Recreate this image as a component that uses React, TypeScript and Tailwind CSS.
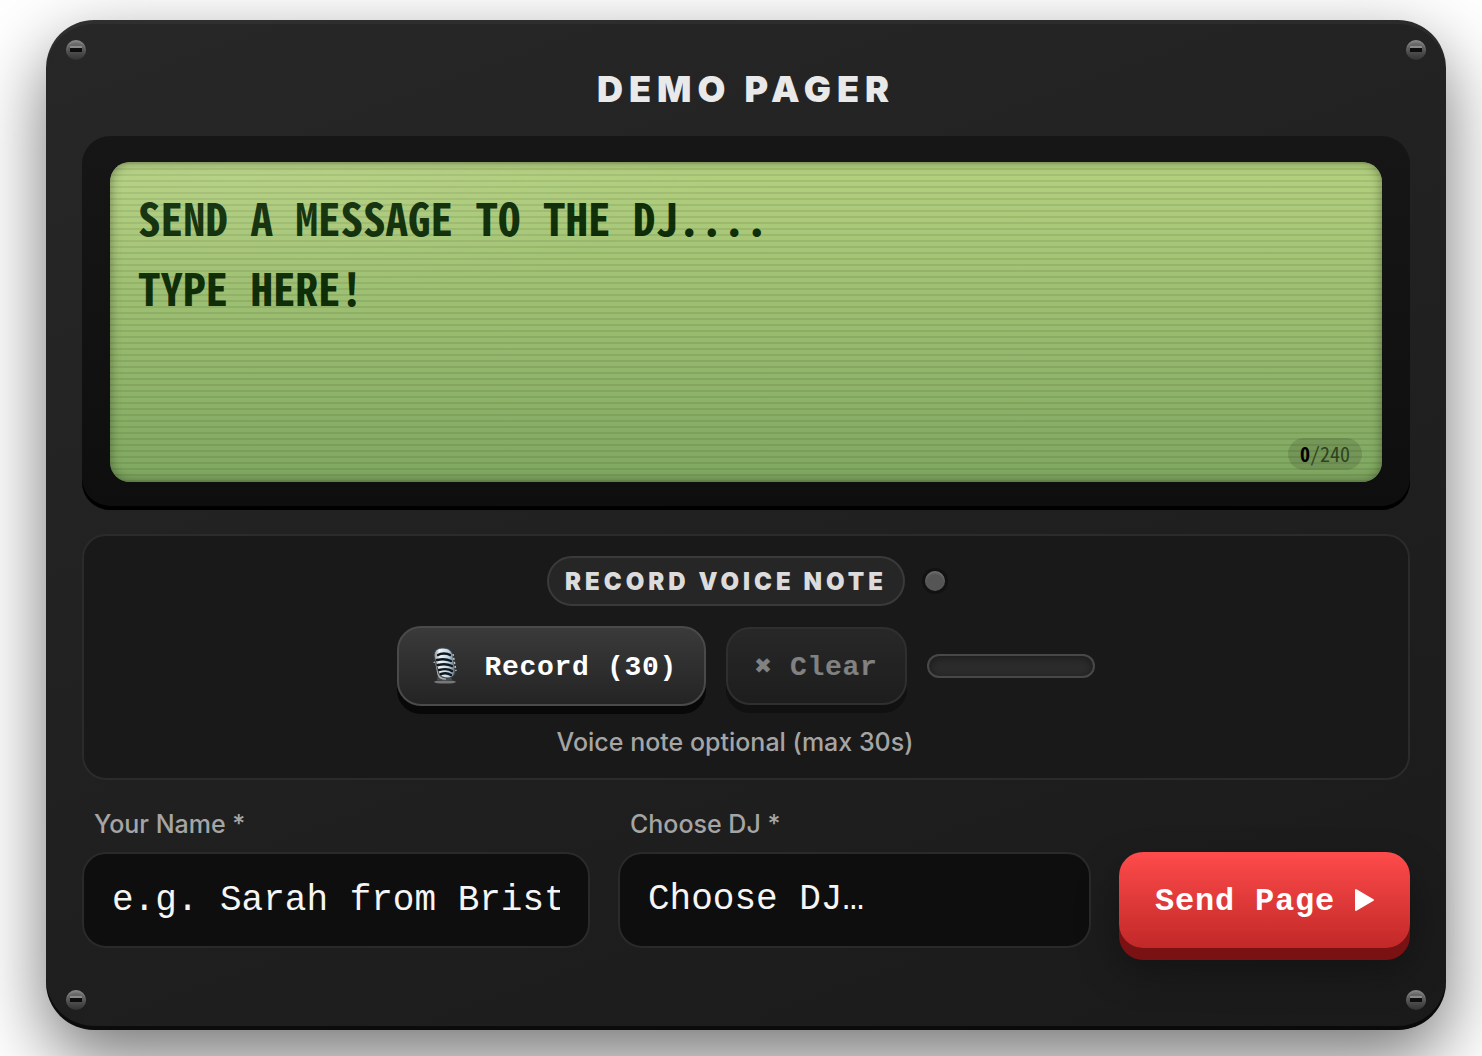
import { useState } from "react";

const MAX_CHARS = 240;
const MAX_SECONDS = 30;
const DJS = ["DJ Nova", "DJ Marlow", "DJ Kite"];

const SCREWS = [
	"left-5 top-5",
	"right-5 top-5",
	"left-5 bottom-5",
	"right-5 bottom-5",
];

function Screw({ className }: { className: string }) {
	return (
		<span
			aria-hidden="true"
			className={`absolute flex size-5 items-center justify-center rounded-full bg-[linear-gradient(180deg,#777,#333)] shadow-[inset_0_2px_2px_rgba(255,255,255,0.15)] ${className}`}
		>
			<span className="h-1 w-3 bg-[#0d0d0d] shadow-[0_-2px_0_#8a8a8a]" />
		</span>
	);
}

function MicIcon() {
	return (
		<svg viewBox="0 0 40 40" className="h-10 w-10" aria-hidden="true">
			<defs>
				<linearGradient id="chrome" x1="0" x2="1">
					<stop offset="0" stopColor="#7f8b92" />
					<stop offset="0.25" stopColor="#eef5fa" />
					<stop offset="0.7" stopColor="#bcd4e6" />
					<stop offset="1" stopColor="#59636a" />
				</linearGradient>
			</defs>
			<ellipse cx="19" cy="36" rx="11" ry="1.6" fill="#777" />
			<path d="M11 34h15l-2-5H12z" fill="#4b4f52" />
			<path d="M8 17c0-1 2-1 2 0l2 11c1 4 4 5 8 5" fill="none" stroke="#a9adb0" strokeWidth="1.4" />
			<path
				d="M8 10C8 4 12 2 17 2c6 0 9 3 10 8l2 13c1 6-3 9-7 9-6 0-9-3-10-8z"
				fill="url(#chrome)"
				stroke="#3b4247"
				strokeWidth="1"
			/>
			<g fill="none" stroke="#10161b" strokeWidth="2.4" strokeLinecap="round">
				<path d="M12 9c3-2 9-2 12 0" />
				<path d="M11 14c4-1 10-1 14 1" />
				<path d="M12 19c4-1 10-1 14 1" />
				<path d="M13 24c4-1 10-1 13 1" />
				<path d="M15 28c3-1 7-1 10 1" />
			</g>
			<path d="M27 8l3 17" stroke="#c3c7ca" strokeWidth="1.4" strokeDasharray="2 2" />
		</svg>
	);
}

function Lcd() {
	const [message, setMessage] = useState("");

	return (
		<div className="rounded-[28px] bg-[linear-gradient(180deg,#161616,#0e0e0e)] px-7 pt-[26px] pb-7 shadow-[inset_0_-4px_0_#000]">
			<div className="relative overflow-hidden rounded-[20px] bg-[linear-gradient(180deg,#b4d17f,#7fa760)] font-['Noto_Sans_Mono_CJK_SC','DejaVu_Sans_Mono',monospace]">
				<textarea
					aria-label="Message"
					value={message}
					maxLength={MAX_CHARS}
					onChange={(e) => setMessage(e.target.value)}
					placeholder={"SEND A MESSAGE TO THE DJ....\nTYPE HERE!"}
					className="block h-80 w-full resize-none bg-transparent px-7 pt-5 text-[45px] leading-[70px] font-bold text-[#0f2f08] uppercase outline-none placeholder:text-[#0f2f08]"
				/>
				{/* scanlines, glare and edge shade */}
				<div className="pointer-events-none absolute inset-0 rounded-[20px] bg-[radial-gradient(ellipse_at_10%_0%,rgba(255,255,255,0.07),transparent_30%),repeating-linear-gradient(180deg,rgba(0,0,0,0.08)_0px,rgba(0,0,0,0.08)_2px,transparent_2px,transparent_6px)] shadow-[inset_0_0_12px_rgba(0,0,0,0.4)]" />
				<div className="absolute right-5 bottom-3 flex h-8 items-center rounded-full bg-black/12 px-3 text-[20px] leading-none text-[#2c441f]">
					<span className="font-bold text-black">{message.length}</span>/{MAX_CHARS}
				</div>
			</div>
		</div>
	);
}

function VoicePanel() {
	return (
		<section className="mt-6 flex flex-col items-center gap-5 rounded-3xl border-2 border-[#2b2b2b] bg-[#191919] py-5">
			<div className="flex items-center gap-5">
				<h2 className="flex h-[50px] items-center rounded-full border-2 border-[#3a3a3a] bg-[#262626] px-4 pt-px text-[24px] font-black tracking-[4px] text-[#dcdcdc]">
					RECORD VOICE NOTE
				</h2>
				<span className="size-5 rounded-full bg-[#555] shadow-[0_0_0_3px_#121212,inset_0_2px_2px_rgba(255,255,255,0.15)]" />
			</div>
			<div className="flex items-center gap-5 font-['Liberation_Mono',monospace] text-[28px] font-bold tracking-wide">
				<button
					type="button"
					className="flex h-20 items-center gap-[18px] rounded-3xl border-2 border-[#4a4a4a] bg-[linear-gradient(180deg,#3a3a3a,#242424)] px-[27px] text-white shadow-[0_8px_0_#080808]"
				>
					<MicIcon />
					<span className="pt-1">Record ({MAX_SECONDS})</span>
				</button>
				<button
					type="button"
					disabled
					className="h-[78px] rounded-3xl border-2 border-[#4a4a4a] bg-[linear-gradient(180deg,#3a3a3a,#242424)] px-[27px] pt-1 text-white opacity-45 shadow-[0_8px_0_#080808]"
				>
					✖ Clear
				</button>
				<div
					role="meter"
					aria-label="Input level"
					aria-valuenow={0}
					className="h-6 w-[168px] rounded-full border-2 border-[#484848] bg-[#2c2c2c] shadow-[inset_0_2px_8px_rgba(0,0,0,0.4)]"
				/>
			</div>
			<p className="pt-px pr-[22px] text-[25px] leading-[31px] font-medium text-[#a5a5a5]">
				Voice note optional (max {MAX_SECONDS}s)
			</p>
		</section>
	);
}

export default function App() {
	const [name, setName] = useState("");
	const [dj, setDj] = useState("");

	return (
		<div className="min-h-screen overflow-hidden bg-white pt-5 pr-9 pb-[26px] pl-[46px] font-['Inter',sans-serif]">
			<main className="relative rounded-[48px] bg-[linear-gradient(160deg,#272727,#1a1a1a)] px-9 pt-12 pb-[82px] shadow-[0_28px_72px_rgba(0,0,0,0.55),inset_0_4px_0_rgba(255,255,255,0.04),inset_0_-4px_0_rgba(0,0,0,0.6)]">
				{SCREWS.map((position) => (
					<Screw key={position} className={position} />
				))}

				<h1 className="mb-6 text-center text-[36px] leading-[42px] font-black tracking-[6px] text-[#e9e9e9] pb-0.5">
					DEMO PAGER
				</h1>

				<Lcd />
				<VoicePanel />

				<form
					onSubmit={(e) => e.preventDefault()}
					className="mt-7 grid grid-cols-[508fr_473fr_auto] items-end gap-7"
				>
					<div className="flex min-w-0 flex-col gap-3">
						<label htmlFor="name" className="pt-px pl-3 text-[25px] leading-[31px] font-medium text-[#a5a5a5]">
							Your Name *
						</label>
						<input
							id="name"
							value={name}
							onChange={(e) => setName(e.target.value)}
							placeholder="e.g. Sarah from Bristol"
							className="h-24 w-full rounded-3xl border-2 border-[#2a2a2a] bg-[#0e0e0e] px-7 font-['Liberation_Mono',monospace] text-[36px] text-[#f5f5f5] outline-none placeholder:text-[#f5f5f5]"
						/>
					</div>
					<div className="flex min-w-0 flex-col gap-3">
						<label htmlFor="dj" className="pt-px pl-3 text-[25px] leading-[31px] font-medium text-[#a5a5a5]">
							Choose DJ *
						</label>
						<select
							id="dj"
							value={dj}
							onChange={(e) => setDj(e.target.value)}
							className="h-24 w-full appearance-none rounded-3xl border-2 border-[#2a2a2a] bg-[#0e0e0e] px-7 font-['Liberation_Mono',monospace] text-[36px] text-[#f5f5f5] outline-none"
						>
							<option value="">Choose DJ…</option>
							{DJS.map((d) => (
								<option key={d}>{d}</option>
							))}
						</select>
					</div>
					<button
						type="submit"
						className="flex h-24 items-center gap-[19px] rounded-3xl bg-[linear-gradient(180deg,#ff4b4b,#c22828)] px-9 font-['Liberation_Mono',monospace] text-[32px] font-bold tracking-wide text-white shadow-[0_12px_0_#7a1214,0_20px_40px_rgba(0,0,0,0.35)]"
					>
						<span className="pt-1">Send Page</span>
						<svg viewBox="0 0 20 24" className="h-6 w-5" aria-hidden="true">
							<path
								d="M2 2v20l17-10z"
								fill="currentColor"
								stroke="currentColor"
								strokeWidth="2"
								strokeLinejoin="round"
							/>
						</svg>
					</button>
				</form>
			</main>
		</div>
	);
}
